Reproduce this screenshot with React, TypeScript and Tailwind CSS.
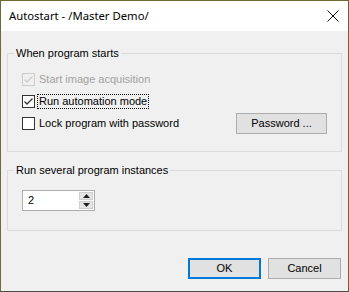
import React from "react";

function Check({ checked, disabled }: { checked?: boolean; disabled?: boolean }) {
  return (
    <div
      className={
        "w-[13px] h-[13px] border flex items-center justify-center shrink-0 " +
        (disabled ? "border-[#cccccc] bg-[#f0f0f0]" : "border-[#333333] bg-white")
      }
    >
      {checked && (
        <svg width="11" height="11" viewBox="0 0 11 11">
          <path
            d="M1.5 5.5 L4 8 L9.5 2.5"
            fill="none"
            stroke={disabled ? "#cccccc" : "#333333"}
            strokeWidth="1.3"
          />
        </svg>
      )}
    </div>
  );
}

export default function App() {
  return (
    <div
      className="w-[349px] h-[292px] flex flex-col border border-t-[#6f6a33] border-l-[#6f6a33] border-r-[#7a5a2e] border-b-[#4a4a4a] text-[11px] text-black"
      style={{ fontFamily: '"Liberation Sans", Arial, sans-serif' }}
    >
      <div
        className="h-[30px] bg-white flex items-center justify-between pl-[8px] pr-[8px] shrink-0 text-[11.3px]"
        style={{ fontFamily: '"Noto Sans", "Segoe UI", sans-serif' }}
      >
        <span className="leading-[16px]">Autostart - /Master Demo/</span>
        <svg width="12" height="12" viewBox="0 0 12 12" className="mr-[1px]">
          <path d="M0.5 0.5 L11.5 11.5 M11.5 0.5 L0.5 11.5" stroke="#111" strokeWidth="1" />
        </svg>
      </div>
      <div className="flex-1 bg-[#f0f0f0] flex flex-col px-[6px]">
        <fieldset className="mt-[14px] border border-[#dcdcdc]">
          <legend className="ml-[6px] px-[2px] leading-[16px]">When program starts</legend>
          <div className="flex flex-col pl-[14px] pr-[14px] pt-[7px] pb-[17px]">
            <div className="h-[22px] flex items-center">
              <Check checked disabled />
              <span className="ml-[3px] text-[#a0a0a0] leading-[13px] px-[1px]">Start image acquisition</span>
            </div>
            <div className="h-[22px] flex items-center">
              <Check checked />
              <span className="ml-[2px] leading-[13px] px-[1px] border border-dotted border-black">
                Run automation mode
              </span>
            </div>
            <div className="h-[22px] flex items-center justify-between">
              <div className="flex items-center">
                <Check />
                <span className="ml-[3px] leading-[13px] px-[1px]">Lock program with password</span>
              </div>
              <button className="w-[91px] h-[21px] bg-[#e1e1e1] border border-[#adadad] leading-[13px]">
                Password ...
              </button>
            </div>
          </div>
        </fieldset>
        <fieldset className="mt-[10px] border border-[#dcdcdc]">
          <legend className="ml-[6px] px-[2px] leading-[16px]">Run several program instances</legend>
          <div className="pl-[14px] pr-[14px] pt-[12px] pb-[19px]">
            <div className="w-[73px] h-[21px] border border-[#adadad] bg-white flex">
              <div className="flex-1 flex items-center pl-[5px] leading-[13px]">2</div>
              <div className="w-[16px] flex flex-col p-[1px] gap-[1px] bg-white">
                <div className="flex-1 bg-[#e5e5e5] border border-[#cfcfcf] flex items-center justify-center">
                  <svg width="7" height="4" viewBox="0 0 7 4">
                    <path d="M3.5 0 L7 4 L0 4 Z" fill="#222" />
                  </svg>
                </div>
                <div className="flex-1 bg-[#e5e5e5] border border-[#cfcfcf] flex items-center justify-center">
                  <svg width="7" height="4" viewBox="0 0 7 4">
                    <path d="M0 0 L7 0 L3.5 4 Z" fill="#222" />
                  </svg>
                </div>
              </div>
            </div>
          </div>
        </fieldset>
        <div className="flex-1" />
        <div className="flex justify-end gap-[7px] pb-[12px] pr-[1px]">
          <button className="w-[73px] h-[21px] bg-[#e1e1e1] border-2 border-[#0078d7] leading-[13px]">OK</button>
          <button className="w-[73px] h-[21px] bg-[#e1e1e1] border border-[#adadad] leading-[13px]">Cancel</button>
        </div>
      </div>
    </div>
  );
}
